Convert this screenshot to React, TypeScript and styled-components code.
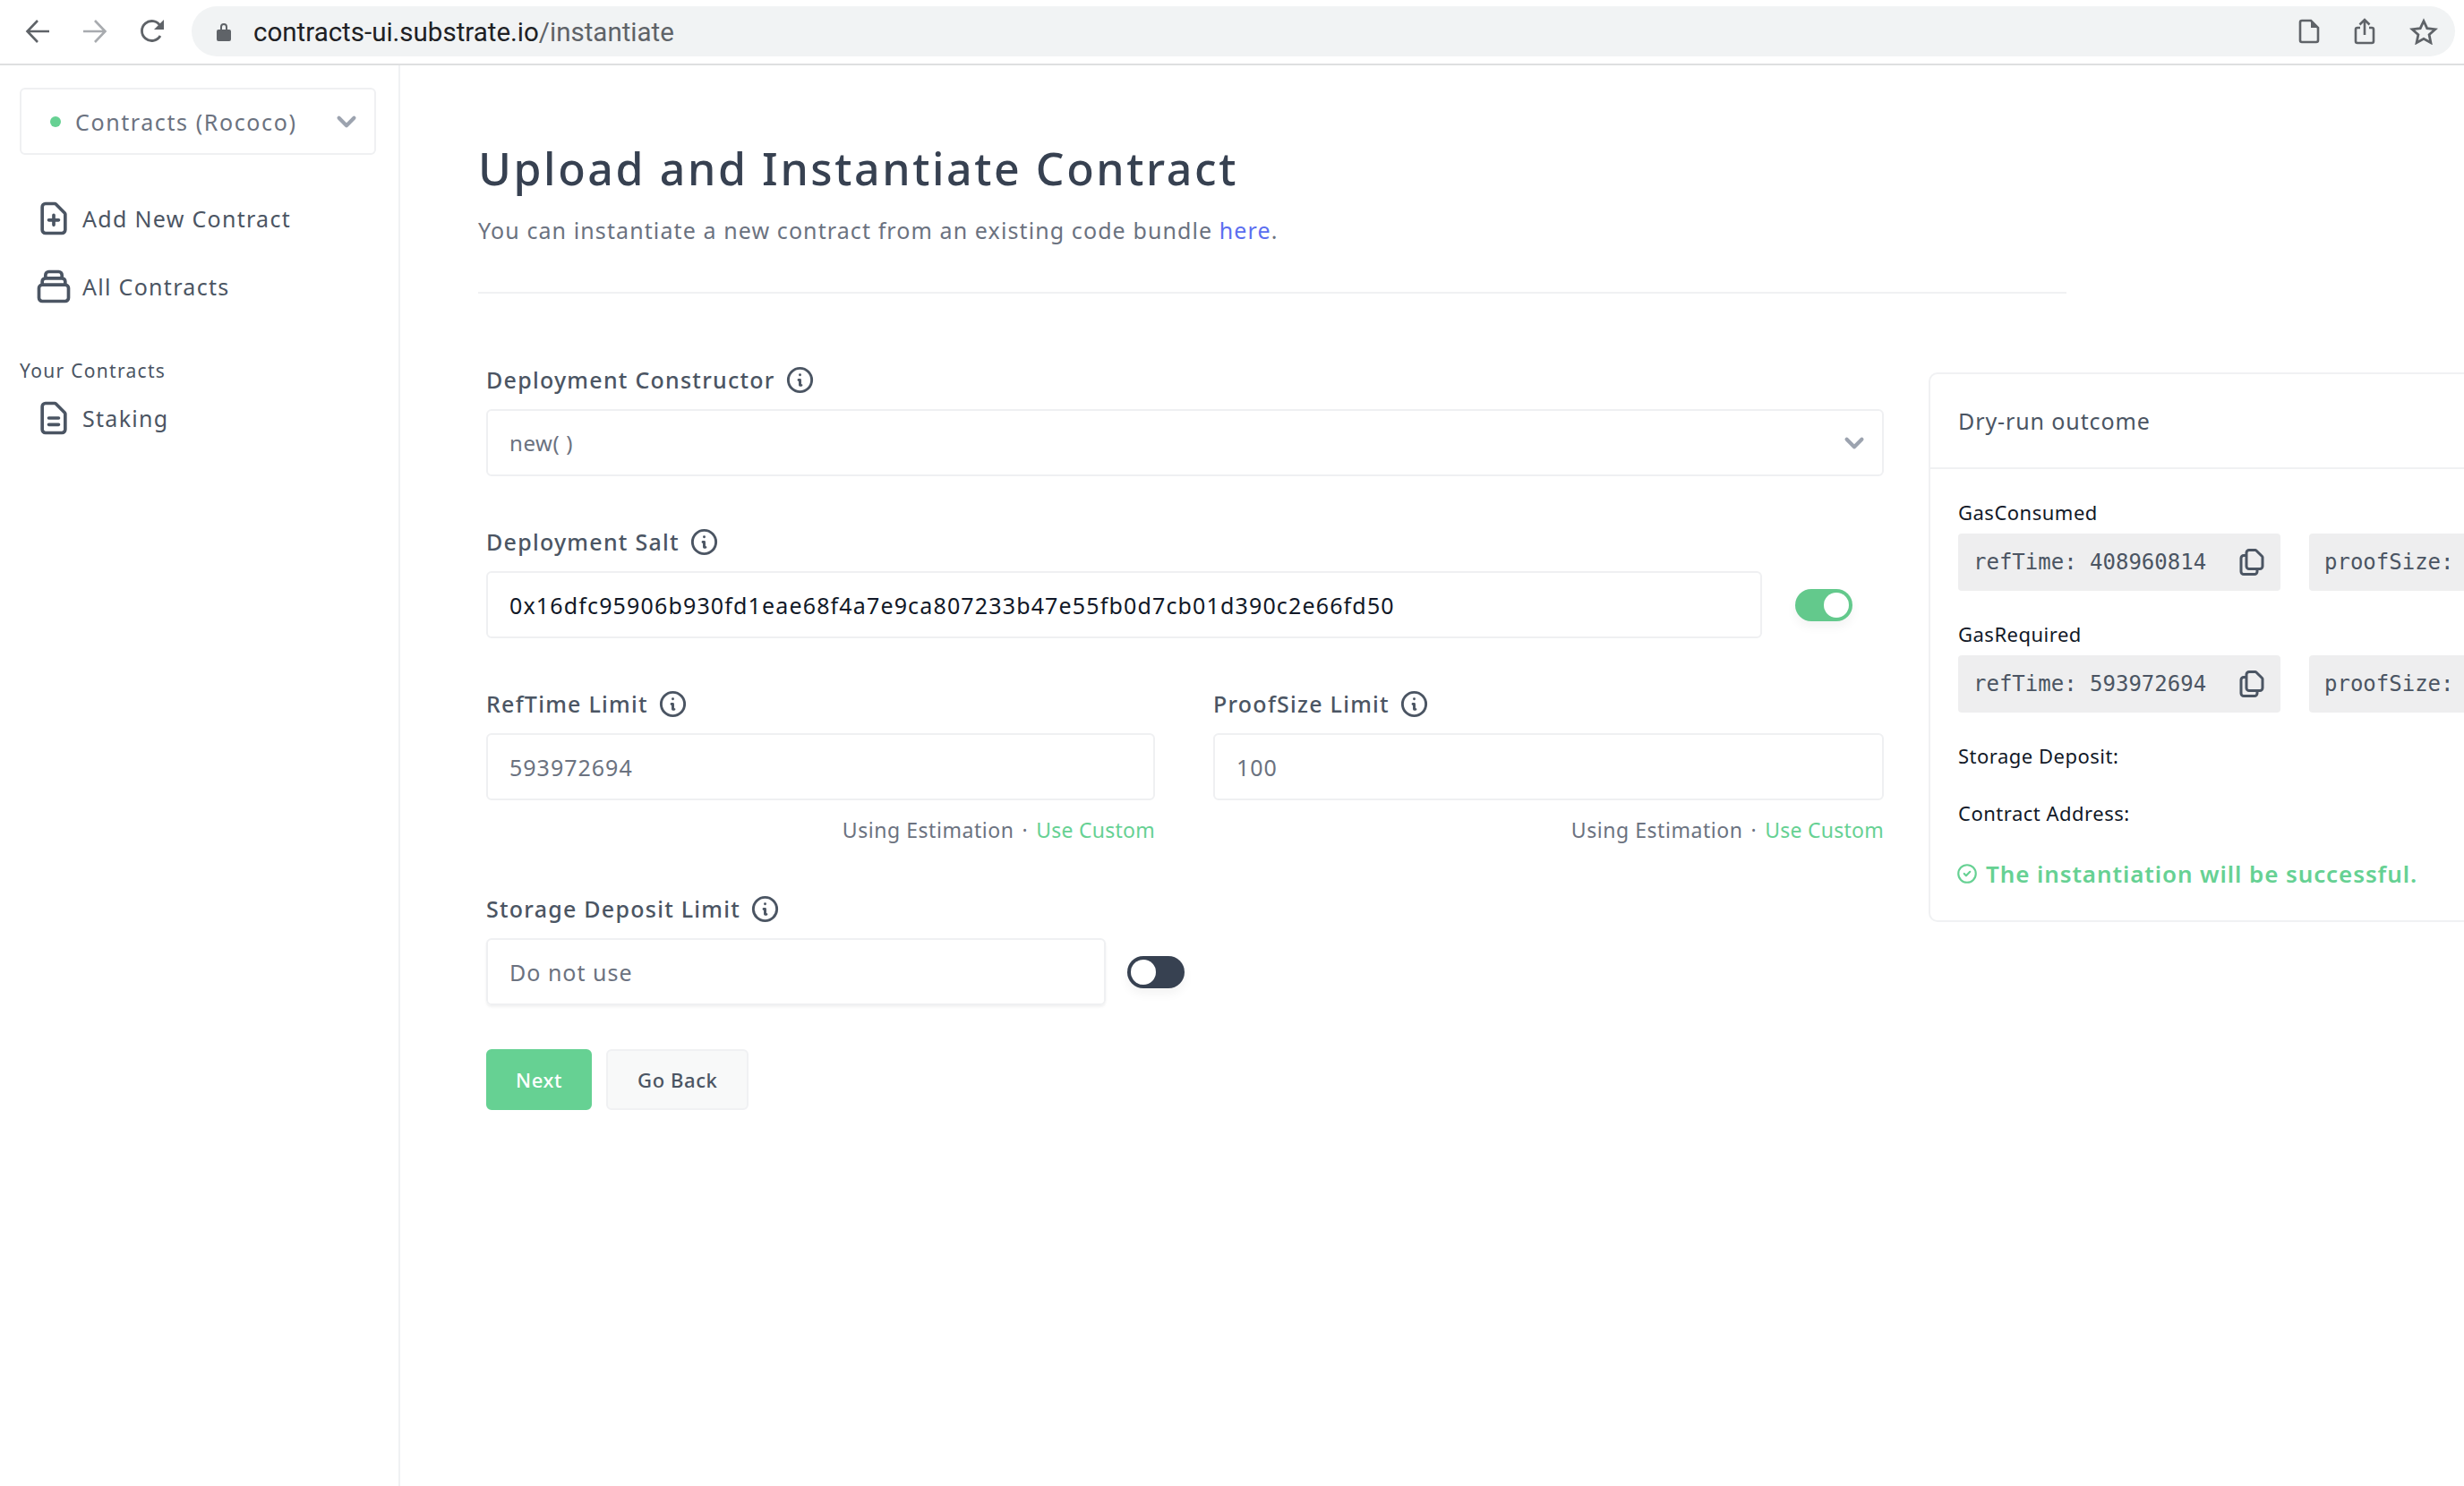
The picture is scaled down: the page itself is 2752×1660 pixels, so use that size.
import { styled, createGlobalStyle } from 'styled-components';

const GlobalStyle = createGlobalStyle`
  html, body {
    margin: 0;
    padding: 0;
    background: #fff;
    font-family: "Noto Sans", "Liberation Sans", sans-serif;
  }
  * { box-sizing: border-box; }
`;

const GREEN = '#66d193';

const Window = styled.div`
  width: 2752px;
  height: 1660px;
  display: flex;
  flex-direction: column;
  overflow: hidden;
`;

const BrowserBar = styled.header`
  height: 73px;
  flex: none;
  display: flex;
  align-items: center;
  padding: 0 10px 1px 0;
  border-bottom: 2px solid #dedfe0;
`;

const NavIcons = styled.div`
  display: flex;
  align-items: center;
  gap: 36px;
  padding-left: 28px;
  width: 214px;
  color: #5f6368;
`;

const Omnibox = styled.div`
  flex: 1;
  height: 56px;
  border-radius: 28px;
  background: #f1f3f4;
  display: flex;
  align-items: center;
  padding: 0 19px 0 28px;
  color: #5f6368;
`;

const Url = styled.div`
  margin-left: 25px;
  padding-top: 2px;
  flex: 1;
  font-family: Roboto, "Liberation Sans", sans-serif;
  font-size: 29.5px;
  color: #202124;
  span { color: #5f6368; }
`;

const OmniIcons = styled.div`
  display: flex;
  align-items: center;
  gap: 38px;
`;

const Body = styled.div`
  flex: 1;
  display: flex;
  min-height: 0;
`;

const Sidebar = styled.aside`
  width: 447px;
  flex: none;
  border-right: 2px solid #f0f1f3;
  padding: 25px 25px 0 22px;
`;

const NetworkSelect = styled.div`
  height: 75px;
  border: 2px solid #eff0f2;
  border-radius: 6px;
  display: flex;
  align-items: center;
  padding: 0 10px 0 32px;
  color: #6b7280;
  font-size: 25px;
  letter-spacing: 1.6px;
`;

const StatusDot = styled.span`
  width: 12px;
  height: 12px;
  border-radius: 50%;
  background: ${GREEN};
  margin-right: 16px;
`;

const SelectName = styled.span`
  flex: 1;
`;

const NavList = styled.nav`
  margin-top: 49px;
  display: flex;
  flex-direction: column;
  gap: 32px;
`;

const NavItem = styled.div`
  height: 44px;
  display: flex;
  align-items: center;
  gap: 10px;
  padding-left: 16px;
  color: #4b5563;
  font-size: 25px;
  letter-spacing: 1.3px;
`;

const SectionTitle = styled.div`
  margin-top: 57px;
  margin-bottom: 16px;
  height: 30px;
  line-height: 30px;
  color: #4b5563;
  font-size: 21px;
  letter-spacing: 1.3px;
`;

const Main = styled.main`
  flex: 1;
  min-width: 0;
  padding: 85px 0 0 87px;
  overflow: hidden;
`;

const PageHeader = styled.div`
  width: 1774px;
  padding-bottom: 50px;
  border-bottom: 2px solid #f0f1f3;
`;

const Title = styled.h1`
  margin: 0;
  height: 60px;
  line-height: 60px;
  font-size: 50px;
  font-weight: 500;
  letter-spacing: 2.6px;
  color: #374151;
`;

const Subtitle = styled.p`
  margin: 21px 0 0;
  padding-bottom: 1px;
  line-height: 36px;
  font-size: 25px;
  letter-spacing: 1.1px;
  color: #6b7280;
  a { color: #5b6ef0; text-decoration: none; }
`;

const Columns = styled.div`
  margin-top: 81px;
  padding-left: 9px;
  display: flex;
  align-items: flex-start;
  gap: 50px;
  width: 2400px;
`;

const Form = styled.div`
  width: 1561px;
  flex: none;
  display: flex;
  flex-direction: column;
  gap: 58px;
`;

const Label = styled.div`
  height: 30px;
  display: flex;
  align-items: center;
  gap: 10px;
  margin-bottom: 18px;
  font-size: 25px;
  font-weight: 500;
  letter-spacing: 1.25px;
  color: #4b5563;
`;

const InfoWrap = styled.span`
  display: flex;
  color: #4b5563;
`;

const Control = styled.div<{ $dark?: boolean; $raised?: boolean }>`
  flex: 1;
  height: 75px;
  border: 2px solid #eff0f2;
  border-radius: 6px;
  display: flex;
  align-items: center;
  justify-content: space-between;
  padding: 0 10px 0 24px;
  font-size: 25px;
  letter-spacing: ${({ $dark }) => ($dark ? '1.15px' : '1px')};
  color: ${({ $dark }) => ($dark ? '#111827' : '#6b7280')};
  box-shadow: ${({ $raised }) => ($raised ? '0 2px 3px rgba(0, 0, 0, 0.06)' : 'none')};
`;

const SelectValue = styled.span`
  font-size: 24px;
  letter-spacing: 0.6px;
`;

const ControlRow = styled.div<{ $gap?: number; $inset?: number; $width?: number }>`
  display: flex;
  align-items: center;
  gap: ${({ $gap }) => $gap ?? 0}px;
  padding-right: ${({ $inset }) => $inset ?? 0}px;
  width: ${({ $width }) => ($width ? `${$width}px` : 'auto')};
`;

const TwoUp = styled.div`
  display: grid;
  grid-template-columns: 747px 749px;
  column-gap: 65px;
`;

const Hint = styled.div`
  margin-top: 19px;
  margin-bottom: 1px;
  height: 28px;
  display: flex;
  justify-content: flex-end;
  align-items: center;
  gap: 9px;
  font-size: 23px;
  letter-spacing: 0.55px;
  color: #6b7280;
  b { font-weight: 400; letter-spacing: 0.25px; color: ${GREEN}; }
`;

const Toggle = styled.div<{ $on: boolean }>`
  width: 64px;
  height: 36px;
  flex: none;
  border-radius: 18px;
  padding: 4px;
  display: flex;
  justify-content: ${({ $on }) => ($on ? 'flex-end' : 'flex-start')};
  background: ${({ $on }) => ($on ? '#63c98c' : '#374151')};
  box-shadow: 0 6px 12px rgba(0, 0, 0, 0.05);
  &::after {
    content: '';
    width: 28px;
    height: 28px;
    border-radius: 50%;
    background: #fff;
  }
`;

const Actions = styled.div`
  margin-top: -9px;
  display: flex;
  gap: 16px;
`;

const Button = styled.div<{ $primary?: boolean }>`
  height: 68px;
  border-radius: 6px;
  display: flex;
  align-items: center;
  padding: 0 ${({ $primary }) => ($primary ? 31 : 33)}px;
  font-size: 22px;
  font-weight: 500;
  letter-spacing: 0.6px;
  color: ${({ $primary }) => ($primary ? '#fff' : '#4b5563')};
  background: ${({ $primary }) => ($primary ? GREEN : '#f8f9f9')};
  border: 2px solid ${({ $primary }) => ($primary ? GREEN : '#f0f1f3')};
`;

const Card = styled.section`
  width: 700px;
  flex: none;
  margin-top: 7px;
  border: 2px solid #f0f1f3;
  border-radius: 10px;
  padding-bottom: 36px;
`;

const CardHeader = styled.div`
  height: 106px;
  padding-left: 31px;
  display: flex;
  align-items: center;
  border-bottom: 2px solid #f0f1f3;
  font-size: 25px;
  letter-spacing: 0.9px;
  color: #4b5563;
`;

const CardBody = styled.div`
  padding: 34px 0 0 31px;
  display: flex;
  flex-direction: column;
  gap: 34px;
`;

const Metric = styled.div`
  display: flex;
  flex-direction: column;
  gap: 10px;
`;

const MetricLabel = styled.div`
  height: 28px;
  line-height: 28px;
  font-size: 22px;
  letter-spacing: 0.5px;
  color: #111827;
`;

const AddressLabel = styled(MetricLabel)`
  margin-top: 2px;
`;

const CodeRow = styled.div`
  display: flex;
  gap: 32px;
`;

const CodeBox = styled.div`
  width: 360px;
  height: 64px;
  flex: none;
  display: flex;
  align-items: center;
  justify-content: space-between;
  padding: 0 14px 0 17px;
  border-radius: 4px;
  background: #eeeeef;
  font-family: "DejaVu Sans Mono", "Liberation Mono", monospace;
  font-size: 24px;
  color: #4b5563;
  white-space: pre;
`;

const Success = styled.div`
  margin-top: 4px;
  height: 32px;
  display: flex;
  align-items: center;
  gap: 8px;
  margin-left: -3px;
  font-size: 26px;
  font-weight: 600;
  letter-spacing: 0.9px;
  color: ${GREEN};
`;

const Outline = ({ d, size, strokeWidth = 2 }: { d: string; size: number; strokeWidth?: number }) => (
  <svg width={size} height={size} viewBox="0 0 24 24" fill="none" stroke="currentColor" strokeWidth={strokeWidth} strokeLinecap="round" strokeLinejoin="round">
    <path d={d} />
  </svg>
);

const InfoIcon = () => (
  <InfoWrap>
    <Outline size={35} d="M13 16h-1v-4h-1m1-4h.01M21 12a9 9 0 11-18 0 9 9 0 0118 0z" />
  </InfoWrap>
);

const Chevron = () => (
  <svg width="42" height="42" viewBox="0 0 20 20" fill="#9ca3af">
    <path d="M5.293 7.293a1 1 0 011.414 0L10 10.586l3.293-3.293a1 1 0 111.414 1.414l-4 4a1 1 0 01-1.414 0l-4-4a1 1 0 010-1.414z" />
  </svg>
);

const CopyIcon = () => (
  <Outline
    size={36}
    d="M8 7v8a2 2 0 002 2h6M8 7V5a2 2 0 012-2h4.586a1 1 0 01.707.293l4.414 4.414a1 1 0 01.293.707V15a2 2 0 01-2 2h-2M8 7H6a2 2 0 00-2 2v10a2 2 0 002 2h8a2 2 0 002-2v-2"
  />
);

const Arrow = ({ flip, color }: { flip?: boolean; color: string }) => (
  <svg width="28" height="28" viewBox="0 0 28 28" fill="none" stroke={color} strokeWidth="2.6" style={flip ? { transform: 'scaleX(-1)' } : undefined}>
    <path d="M27 14H3M14 2L2.500 14 14 26" />
  </svg>
);

export default function App() {
  return (
    <Window>
      <GlobalStyle />
      <BrowserBar>
        <NavIcons>
          <Arrow color="#5f6368" />
          <Arrow flip color="#a8abaf" />
          <svg width="30" height="28" viewBox="0 0 30 28" fill="none">
            <path d="M23 19a11 11 0 1 1 0-11" stroke="#5f6368" strokeWidth="2.8" />
            <path d="M27 1v11H16z" fill="#5f6368" />
          </svg>
        </NavIcons>
        <Omnibox>
          <svg width="16" height="21" viewBox="0 0 16 21" fill="#5f6368">
            <path d="M4 8V5a4 4 0 0 1 8 0v3h2a2 2 0 0 1 2 2v9a2 2 0 0 1-2 2H2a2 2 0 0 1-2-2v-9a2 2 0 0 1 2-2zm2 0h4V5a2 2 0 0 0-4 0z" />
          </svg>
          <Url>
            contracts-ui.substrate.io<span>/instantiate</span>
          </Url>
          <OmniIcons>
            <svg width="24" height="28" viewBox="0 0 24 28" fill="none">
              <path d="M2 4a2 2 0 0 1 2-2h10l8 8v14a2 2 0 0 1-2 2H4a2 2 0 0 1-2-2z" stroke="#5f6368" strokeWidth="2.6" />
              <path d="M14 2l8 8h-8z" fill="#5f6368" />
            </svg>
            <svg width="24" height="30" viewBox="0 0 24 30" fill="none" stroke="#5f6368" strokeWidth="2.6">
              <path d="M7 11H4a2 2 0 0 0-2 2v13a2 2 0 0 0 2 2h16a2 2 0 0 0 2-2V13a2 2 0 0 0-2-2h-3" />
              <path d="M12 19V2M6.500 7.500L12 2l5.500 5.500" />
            </svg>
            <svg width="32" height="30" viewBox="0 0 32 30" fill="none" stroke="#5f6368" strokeWidth="2.8">
              <path d="M16 3.500l3.800 8.200 9 1-6.700 6.100 1.800 8.900L16 23.300l-7.900 4.400 1.800-8.900-6.700-6.100 9-1z" />
            </svg>
          </OmniIcons>
        </Omnibox>
      </BrowserBar>
      <Body>
        <Sidebar>
          <NetworkSelect>
            <StatusDot />
            <SelectName>Contracts (Rococo)</SelectName>
            <Chevron />
          </NetworkSelect>
          <NavList>
            <NavItem>
              <Outline size={44} d="M9 13h6m-3-3v6m5 5H7a2 2 0 01-2-2V5a2 2 0 012-2h5.586a1 1 0 01.707.293l5.414 5.414a1 1 0 01.293.707V19a2 2 0 01-2 2z" />
              Add New Contract
            </NavItem>
            <NavItem>
              <Outline size={44} d="M19 11H5m14 0a2 2 0 012 2v6a2 2 0 01-2 2H5a2 2 0 01-2-2v-6a2 2 0 012-2m14 0V9a2 2 0 00-2-2M5 11V9a2 2 0 012-2m0 0V5a2 2 0 012-2h6a2 2 0 012 2v2M7 7h10" />
              All Contracts
            </NavItem>
          </NavList>
          <SectionTitle>Your Contracts</SectionTitle>
          <NavItem>
            <Outline size={44} d="M9 12h6m-6 4h6m2 5H7a2 2 0 01-2-2V5a2 2 0 012-2h5.586a1 1 0 01.707.293l5.414 5.414a1 1 0 01.293.707V19a2 2 0 01-2 2z" />
            Staking
          </NavItem>
        </Sidebar>
        <Main>
          <PageHeader>
            <Title>Upload and Instantiate Contract</Title>
            <Subtitle>
              You can instantiate a new contract from an existing code bundle <a>here</a>.
            </Subtitle>
          </PageHeader>
          <Columns>
            <Form>
              <div>
                <Label>
                  Deployment Constructor <InfoIcon />
                </Label>
                <ControlRow>
                  <Control>
                    <SelectValue>new( )</SelectValue>
                    <Chevron />
                  </Control>
                </ControlRow>
              </div>
              <div>
                <Label>
                  Deployment Salt <InfoIcon />
                </Label>
                <ControlRow $gap={37} $inset={35}>
                  <Control $dark>0x16dfc95906b930fd1eae68f4a7e9ca807233b47e55fb0d7cb01d390c2e66fd50</Control>
                  <Toggle $on />
                </ControlRow>
              </div>
              <TwoUp>
                <div>
                  <Label>
                    RefTime Limit <InfoIcon />
                  </Label>
                  <ControlRow>
                    <Control>593972694</Control>
                  </ControlRow>
                  <Hint>
                    Using Estimation <span>·</span> <b>Use Custom</b>
                  </Hint>
                </div>
                <div>
                  <Label>
                    ProofSize Limit <InfoIcon />
                  </Label>
                  <ControlRow>
                    <Control>100</Control>
                  </ControlRow>
                  <Hint>
                    Using Estimation <span>·</span> <b>Use Custom</b>
                  </Hint>
                </div>
              </TwoUp>
              <div>
                <Label>
                  Storage Deposit Limit <InfoIcon />
                </Label>
                <ControlRow $gap={24} $width={780}>
                  <Control $raised>Do not use</Control>
                  <Toggle $on={false} />
                </ControlRow>
              </div>
              <Actions>
                <Button $primary>Next</Button>
                <Button>Go Back</Button>
              </Actions>
            </Form>
            <Card>
              <CardHeader>Dry-run outcome</CardHeader>
              <CardBody>
                <Metric>
                  <MetricLabel>GasConsumed</MetricLabel>
                  <CodeRow>
                    <CodeBox>
                      refTime: 408960814
                      <CopyIcon />
                    </CodeBox>
                    <CodeBox>proofSize:</CodeBox>
                  </CodeRow>
                </Metric>
                <Metric>
                  <MetricLabel>GasRequired</MetricLabel>
                  <CodeRow>
                    <CodeBox>
                      refTime: 593972694
                      <CopyIcon />
                    </CodeBox>
                    <CodeBox>proofSize:</CodeBox>
                  </CodeRow>
                </Metric>
                <MetricLabel>Storage Deposit:</MetricLabel>
                <AddressLabel>Contract Address:</AddressLabel>
                <Success>
                  <Outline size={26} d="M9 12l2 2 4-4m6 2a9 9 0 11-18 0 9 9 0 0118 0z" />
                  The instantiation will be successful.
                </Success>
              </CardBody>
            </Card>
          </Columns>
        </Main>
      </Body>
    </Window>
  );
}
